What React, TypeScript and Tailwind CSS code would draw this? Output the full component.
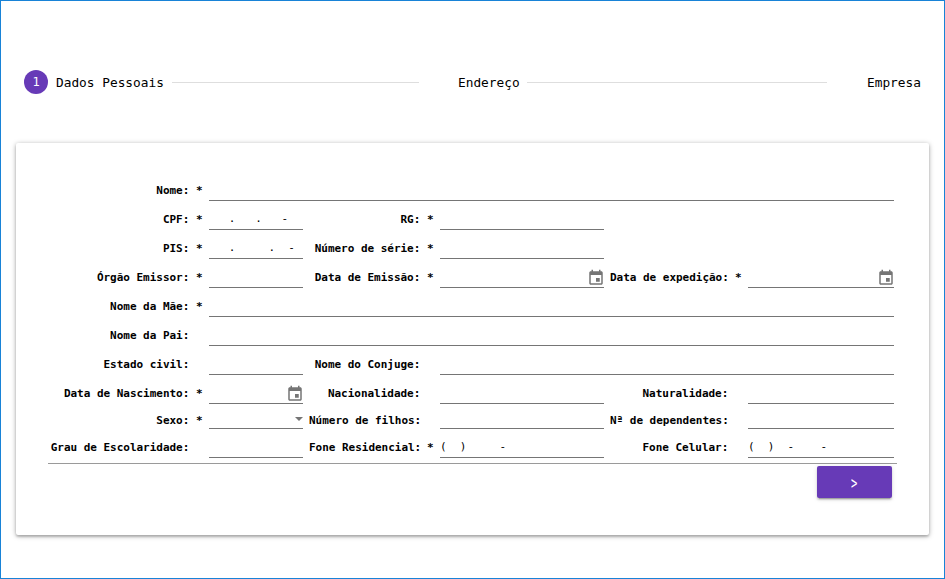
import type { ReactNode } from "react";

function Label({ text, required = false }: { text: string; required?: boolean }) {
  return (
    <label className="flex justify-end whitespace-pre pb-[3px] pr-[0.5px] font-bold leading-[14px] text-black">
      {text}
      <span className="w-[13.2px] text-right">{required ? "*" : ""}</span>
    </label>
  );
}

function Field({ value = "", wide = "", children }: { value?: string; wide?: string; children?: ReactNode }) {
  return (
    <div className={`flex items-end justify-between self-stretch border-b border-[#757575] ${wide}`}>
      <span className="whitespace-pre pb-[3px] leading-[14px] text-black">{value}</span>
      {children}
    </div>
  );
}

function CalendarIcon() {
  return (
    <svg className="-mr-[0.5px] h-[18px] w-[18px] shrink-0 fill-[#757575]" viewBox="0 0 24 24">
      <path d="M17 12h-5v5h5v-5zM16 1v2H8V1H6v2H5c-1.11 0-1.99.9-1.99 2L3 19c0 1.1.89 2 2 2h14c1.1 0 2-.9 2-2V5c0-1.1-.9-2-2-2h-1V1h-2zm3 18H5V8h14v11z" />
    </svg>
  );
}

function Row({ short = false, children }: { short?: boolean; children: ReactNode }) {
  return (
    <div
      className={`grid grid-cols-[155px_94px_125px_164px_132px_146px] items-end gap-x-1.5 ${
        short ? "h-[25px] [&>label]:pb-px" : "h-[29px]"
      }`}
    >
      {children}
    </div>
  );
}

function Stepper() {
  return (
    <header className="flex h-6 items-center pl-[23px] pr-[23px] text-[12.8px] leading-6 text-black">
      <span className="flex h-6 w-6 items-center justify-center rounded-full bg-[#673ab7] text-[12px] text-white">1</span>
      <span className="ml-2 w-[108px] whitespace-pre pt-0.5">Dados Pessoais</span>
      <span className="ml-2 h-px w-[247px] bg-[#dedede]" />
      <span className="ml-[39px] w-[62px] pt-0.5">Endereço</span>
      <span className="ml-[7px] h-px w-[300px] bg-[#dedede]" />
      <span className="ml-10 pt-0.5">Empresa</span>
    </header>
  );
}

export default function App() {
  return (
    <div className="h-[579px] w-[945px] overflow-hidden border border-[#1883d7] bg-white pt-[69px] font-['DejaVu_Sans_Mono',monospace]">
      <Stepper />
      <main className="ml-[15px] mt-[49px] h-[392px] w-[913px] rounded-[2px] bg-white pl-8 pt-[29px] shadow-[0_1px_5px_0_rgba(0,0,0,0.35),0_2px_2px_0_rgba(0,0,0,0.14)]">
        <form className="w-[849px] text-[11px] tracking-[-0.022px]">
          <Row>
            <Label text="Nome:" required />
            <Field wide="col-span-5" />
          </Row>
          <Row>
            <Label text="CPF:" required />
            <Field value="   .   .   -" />
            <Label text="RG:" required />
            <Field />
          </Row>
          <Row>
            <Label text="PIS:" required />
            <Field value="   .     .  -" />
            <Label text="Número de série:" required />
            <Field />
          </Row>
          <Row>
            <Label text="Órgão Emissor:" required />
            <Field />
            <Label text="Data de Emissão:" required />
            <Field><CalendarIcon /></Field>
            <Label text="Data de expedição:" required />
            <Field><CalendarIcon /></Field>
          </Row>
          <Row>
            <Label text="Nome da Mãe:" required />
            <Field wide="col-span-5" />
          </Row>
          <Row>
            <Label text="Nome da Pai:" />
            <Field wide="col-span-5" />
          </Row>
          <Row>
            <Label text="Estado civil:" />
            <Field />
            <Label text="Nome do Conjuge:" />
            <Field wide="col-span-3" />
          </Row>
          <Row>
            <Label text="Data de Nascimento:" required />
            <Field><CalendarIcon /></Field>
            <Label text="Nacionalidade:" />
            <Field />
            <Label text="Naturalidade:" />
            <Field />
          </Row>
          <Row short>
            <Label text="Sexo:" required />
            <Field>
              <span className="mb-[7px] h-0 w-0 border-x-4 border-t-4 border-x-transparent border-t-[#757575]" />
            </Field>
            <Label text="Número de filhos:" />
            <Field />
            <Label text="Nª de dependentes:" />
            <Field />
          </Row>
          <Row>
            <Label text="Grau de Escolaridade:" />
            <Field />
            <Label text="Fone Residencial:" required />
            <Field value="(  )     -" />
            <Label text="Fone Celular:" />
            <Field value="(  )  -    -" />
          </Row>
          <hr className="mt-[5px] border-t border-[#9a9a9a]" />
          <div className="mt-0.5 flex justify-end pr-[5px]">
            <button
              type="button"
              className="flex h-8 w-[75px] items-center justify-center rounded-[2px] bg-[#673ab7] pt-0.5 text-[14px] text-white shadow-[0_3px_1px_-2px_rgba(0,0,0,0.2),0_2px_2px_0_rgba(0,0,0,0.14),0_1px_5px_0_rgba(0,0,0,0.12)]"
            >
              <span className="inline-block scale-x-75 scale-y-125">&gt;</span>
            </button>
          </div>
        </form>
      </main>
    </div>
  );
}
